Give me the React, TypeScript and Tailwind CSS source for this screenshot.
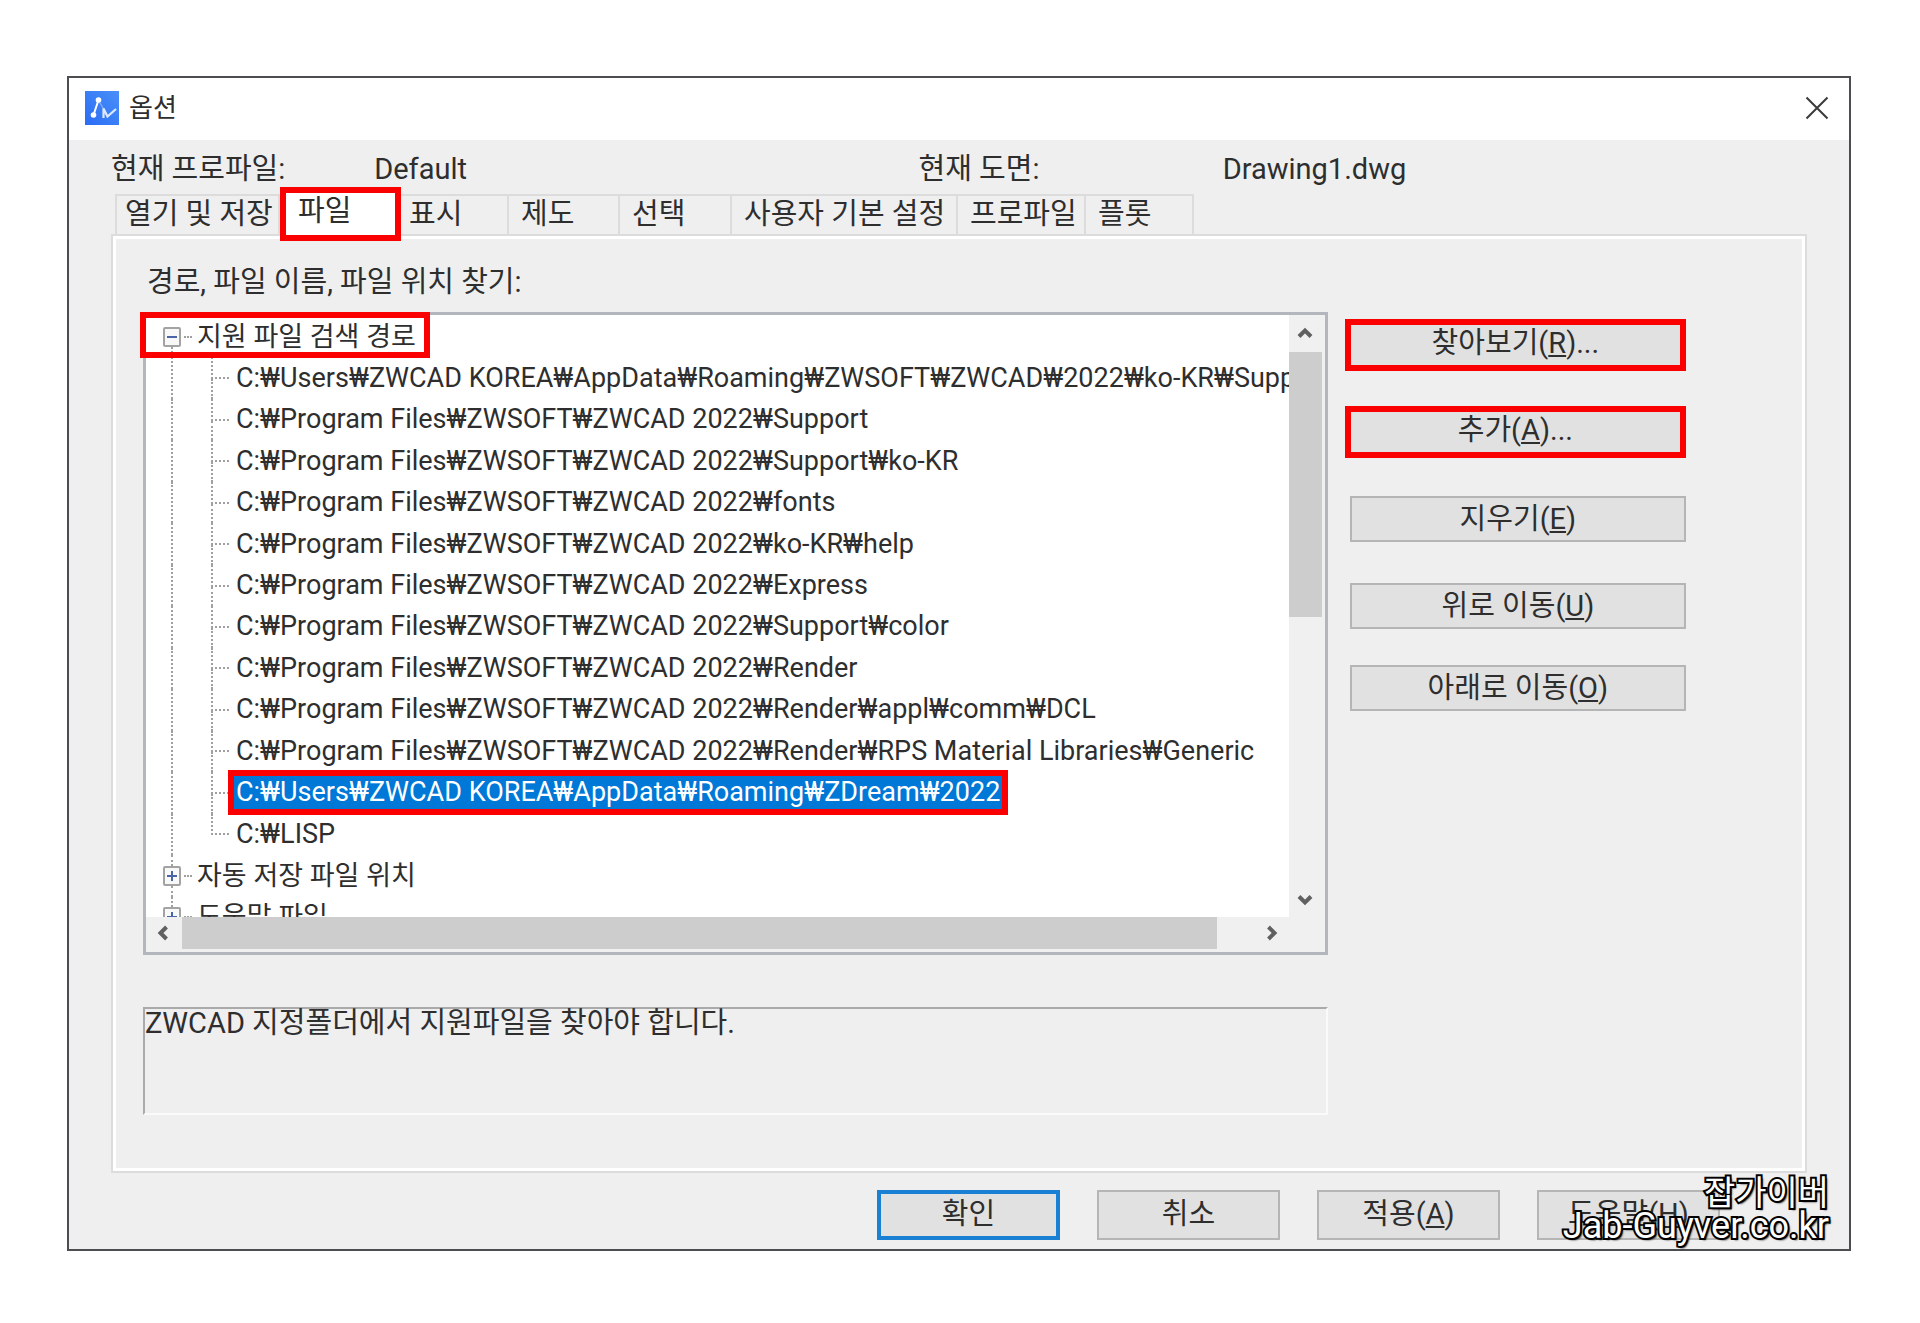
import { ReactNode } from "react";
import { clsx } from "clsx";

const tabs = [
  { label: "열기 및 저장", size: "w-[165px] pl-2 border-l-2" },
  { label: "파일", size: "", active: true },
  { label: "표시", size: "w-[108px] pl-2" },
  { label: "제도", size: "w-[111px] pl-3" },
  { label: "선택", size: "w-[112px] pl-3" },
  { label: "사용자 기본 설정", size: "w-[226px] pl-3" },
  { label: "프로파일", size: "w-[128px] pl-3" },
  { label: "플롯", size: "w-[108px] pl-3" },
];

const paths = [
  "C:₩Users₩ZWCAD KOREA₩AppData₩Roaming₩ZWSOFT₩ZWCAD₩2022₩ko-KR₩Support",
  "C:₩Program Files₩ZWSOFT₩ZWCAD 2022₩Support",
  "C:₩Program Files₩ZWSOFT₩ZWCAD 2022₩Support₩ko-KR",
  "C:₩Program Files₩ZWSOFT₩ZWCAD 2022₩fonts",
  "C:₩Program Files₩ZWSOFT₩ZWCAD 2022₩ko-KR₩help",
  "C:₩Program Files₩ZWSOFT₩ZWCAD 2022₩Express",
  "C:₩Program Files₩ZWSOFT₩ZWCAD 2022₩Support₩color",
  "C:₩Program Files₩ZWSOFT₩ZWCAD 2022₩Render",
  "C:₩Program Files₩ZWSOFT₩ZWCAD 2022₩Render₩appl₩comm₩DCL",
  "C:₩Program Files₩ZWSOFT₩ZWCAD 2022₩Render₩RPS Material Libraries₩Generic",
  "C:₩Users₩ZWCAD KOREA₩AppData₩Roaming₩ZDream₩2022",
  "C:₩LISP",
];
const selectedPath = 10;

function AppLogo() {
  return (
    <svg viewBox="0 0 34 34" className="size-[34px]" aria-hidden="true">
      <defs>
        <linearGradient id="logo" x1="0" y1="1" x2="1" y2="0">
          <stop offset="0" stopColor="#2a6cf5" />
          <stop offset="1" stopColor="#4a90f8" />
        </linearGradient>
      </defs>
      <rect width="34" height="34" fill="url(#logo)" />
      <path d="M13.5 9L18.5 18" stroke="#7fabfb" strokeWidth="1.5" fill="none" />
      <path d="M13.5 9L8.5 24" stroke="#fff" strokeWidth="2" fill="none" />
      <path d="M18.5 27V17.5L22.500 25.500L31 18" stroke="#dce9ff" strokeWidth="2.2" fill="none" />
      <circle cx="13.5" cy="9" r="2.8" fill="#fff" />
      <circle cx="8.5" cy="24" r="2.8" fill="#fff" />
    </svg>
  );
}

const chevrons = {
  up: "M2 10.5L8 4.5L14 10.5",
  down: "M2 5.5L8 11.5L14 5.5",
  left: "M10.5 2L4.5 8L10.5 14",
  right: "M5.5 2L11.5 8L5.5 14",
};

function ScrollArrow({ dir, label, className }: { dir: keyof typeof chevrons; label: string; className: string }) {
  return (
    <button type="button" aria-label={label} className={clsx("flex shrink-0 items-center justify-center", className)}>
      <svg viewBox="0 0 16 16" className="size-4" fill="none" stroke="#606060" strokeWidth="4">
        <path d={chevrons[dir]} />
      </svg>
    </button>
  );
}

function PushButton({ children, className }: { children: ReactNode; className: string }) {
  return (
    <button
      type="button"
      className={clsx("flex items-center justify-center whitespace-nowrap bg-[#e1e1e1] leading-8", className)}
    >
      <span>{children}</span>
    </button>
  );
}

const marked = "h-[52px] border-[6px] border-[#fb0000] pb-1";
const plain = "ml-[5px] h-[46px] border-2 border-[#b5b5b5]";
const bottom = "h-[50px] w-[183px] border-2 border-[#b5b5b5] pb-0.5";

function GroupRow({ label, open, first }: { label: string; open?: boolean; first?: boolean }) {
  return (
    <li role="treeitem" aria-expanded={!!open} aria-level={1} className="flex min-h-0 items-stretch">
      <span className="ml-[17px] flex w-[18px] flex-col">
        <span className={clsx("ml-2 flex-1", !first && "border-l-2 border-dotted border-[#a0a0a0]")} />
        <button
          type="button"
          aria-label={open ? "접기" : "펼치기"}
          className="flex h-5 items-center justify-center rounded-xs border-2 border-[#a3a3a3] bg-[#f8f8f8]"
        >
          <svg viewBox="0 0 10 10" className="size-[10px]" stroke="#4a64a8" strokeWidth="2">
            <path d={open ? "M0 5H10" : "M0 5H10M5 0V10"} />
          </svg>
        </button>
        <span className="ml-2 flex-1 border-l-2 border-dotted border-[#a0a0a0]" />
      </span>
      <span className="ml-[3px] w-2 self-center border-t-2 border-dotted border-[#a0a0a0]" />
      <span className="ml-[5px] self-center whitespace-nowrap">{label}</span>
    </li>
  );
}

function PathRow({ path, selected, last }: { path: string; selected: boolean; last: boolean }) {
  return (
    <li role="treeitem" aria-selected={selected} aria-level={2} className="flex min-h-0 items-stretch">
      <span className="ml-[25px] w-10 shrink-0 border-l-2 border-dotted border-[#a0a0a0]" />
      <span className="flex w-[18px] shrink-0 flex-col">
        <span className="flex-1 border-b-2 border-l-2 border-dotted border-[#a0a0a0]" />
        <span className={clsx("flex-1", !last && "border-l-2 border-dotted border-[#a0a0a0]")} />
      </span>
      <span
        className={clsx(
          "ml-[5px] self-center whitespace-nowrap px-0.5 leading-[33px]",
          selected && "bg-[#0078d7] text-white outline-6 outline-[#fb0000]",
        )}
      >
        {path}
      </span>
    </li>
  );
}

export default function App() {
  return (
    <div className="min-h-screen bg-white pt-[76px] pr-[69px] pb-[71px] pl-[67px] font-[Roboto,'Noto_Sans_CJK_KR',sans-serif] text-[29px] leading-9 text-[#2e2e2e]">
      <main className="relative border-2 border-[#4b4d50] bg-[#efefef]">
        <header className="flex h-[62px] items-center bg-white pr-5 pb-0.5 pl-4">
          <AppLogo />
          <h1 className="ml-2.5 text-[26px]">옵션</h1>
          <button type="button" aria-label="닫기" className="ml-auto">
            <svg viewBox="0 0 24 24" className="size-6" fill="none" stroke="#3a3a3a" strokeWidth="2">
              <path d="M1.500 1.500L22.500 22.500M22.500 1.500L1.500 22.500" />
            </svg>
          </button>
        </header>

        <div className="pr-[42px] pl-[42px]">
          <div className="grid h-[54px] grid-cols-[263fr_544fr_304fr_584fr] items-center pt-[3px] whitespace-nowrap">
            <span>현재 프로파일:</span>
            <span>Default</span>
            <span>현재 도면:</span>
            <span>Drawing1.dwg</span>
          </div>

          <div role="tablist" className="flex h-10 items-center pl-1">
            {tabs.map((t) => (
              <button
                key={t.label}
                type="button"
                role="tab"
                aria-selected={!!t.active}
                className={clsx(
                  "shrink-0 whitespace-nowrap text-left",
                  t.active
                    ? "relative z-10 h-[54px] w-[121px] border-[6px] border-[#fb0000] bg-white pb-1.5 pl-3"
                    : "h-10 border-t-2 border-r-2 border-[#dcdcdc] pb-0.5",
                  t.size,
                )}
              >
                {t.label}
              </button>
            ))}
          </div>

          <section className="border-2 border-[#dcdcdc]">
            <div className="border-[3px] border-white pr-[116px] pb-[53px] pl-[27px]">
              <h2 id="paths" className="flex h-[73px] items-center pt-3 pl-1">
                경로, 파일 이름, 파일 위치 찾기:
              </h2>
              <div className="grid grid-cols-[1184fr_341fr] gap-x-[17px]">
                <div className="min-w-0">
                  <div className="relative border-[3px] border-[#b3b6bc] bg-[#f0f0f0] text-[27px]">
                    <div className="flex h-[602px]">
                      <div className="min-w-0 flex-1 overflow-hidden bg-white pt-px">
                        <ul role="tree" aria-labelledby="paths" className="grid h-[622px] grid-rows-[repeat(15,1fr)]">
                          <GroupRow label="지원 파일 검색 경로" open first />
                          {paths.map((p, i) => (
                            <PathRow key={p} path={p} selected={i === selectedPath} last={i === paths.length - 1} />
                          ))}
                          <GroupRow label="자동 저장 파일 위치" />
                          <GroupRow label="도움말 파일" />
                        </ul>
                      </div>
                      <div className="flex w-9 flex-col pr-[3px]">
                        <ScrollArrow dir="up" label="위로 스크롤" className="h-[37px]" />
                        <div className="h-[265px] bg-[#cdcdcd]" />
                        <ScrollArrow dir="down" label="아래로 스크롤" className="mt-auto h-9" />
                      </div>
                    </div>
                    <div className="mr-9 flex h-[35px] pb-[3px]">
                      <ScrollArrow dir="left" label="왼쪽으로 스크롤" className="w-9" />
                      <div className="min-w-0 flex-1 pr-9">
                        <div className="h-full bg-[#cdcdcd]" />
                      </div>
                      <ScrollArrow dir="right" label="오른쪽으로 스크롤" className="w-9" />
                    </div>
                    <div className="pointer-events-none absolute -top-[3px] -left-1.5 h-[46px] w-[290px] border-[6px] border-[#fb0000]" />
                  </div>

                  <p className="mt-[52px] h-[108px] border-2 border-t-[#aaaaaa] border-r-[#fafafa] border-b-[#fafafa] border-l-[#aaaaaa] leading-7">
                    ZWCAD 지정폴더에서 지원파일을 찾아야 합니다.
                  </p>
                </div>

                <div className="mt-[7px] grid auto-rows-[52px] content-start items-center gap-y-[35px]">
                  <PushButton className={marked}>
                    찾아보기(<u>R</u>)...
                  </PushButton>
                  <PushButton className={marked}>
                    추가(<u>A</u>)...
                  </PushButton>
                  <PushButton className={plain}>
                    지우기(<u>E</u>)
                  </PushButton>
                  <PushButton className={plain}>
                    위로 이동(<u>U</u>)
                  </PushButton>
                  <PushButton className={clsx(plain, "mb-2.5")}>
                    아래로 이동(<u>O</u>)
                  </PushButton>
                </div>
              </div>
            </div>
          </section>
        </div>

        <footer className="flex justify-end gap-[37px] pt-[17px] pr-[129px] pb-[9px]">
          <PushButton className="h-[50px] w-[183px] border-4 border-[#1a80d4] pb-0.5">확인</PushButton>
          <PushButton className={bottom}>취소</PushButton>
          <PushButton className={bottom}>
            적용(<u>A</u>)
          </PushButton>
          <PushButton className={bottom}>
            도움말(<u>H</u>)
          </PushButton>
        </footer>

        <div className="pointer-events-none absolute right-5 bottom-1.5 text-right text-[34px] leading-[33px] whitespace-nowrap text-white [paint-order:stroke_fill] [-webkit-text-stroke:4px_#000] [text-shadow:2px_2px_2px_#000]">
          <div>잡가이버</div>
          <div className="text-[36px]">Jab-Guyver.co.kr</div>
        </div>
      </main>
    </div>
  );
}
